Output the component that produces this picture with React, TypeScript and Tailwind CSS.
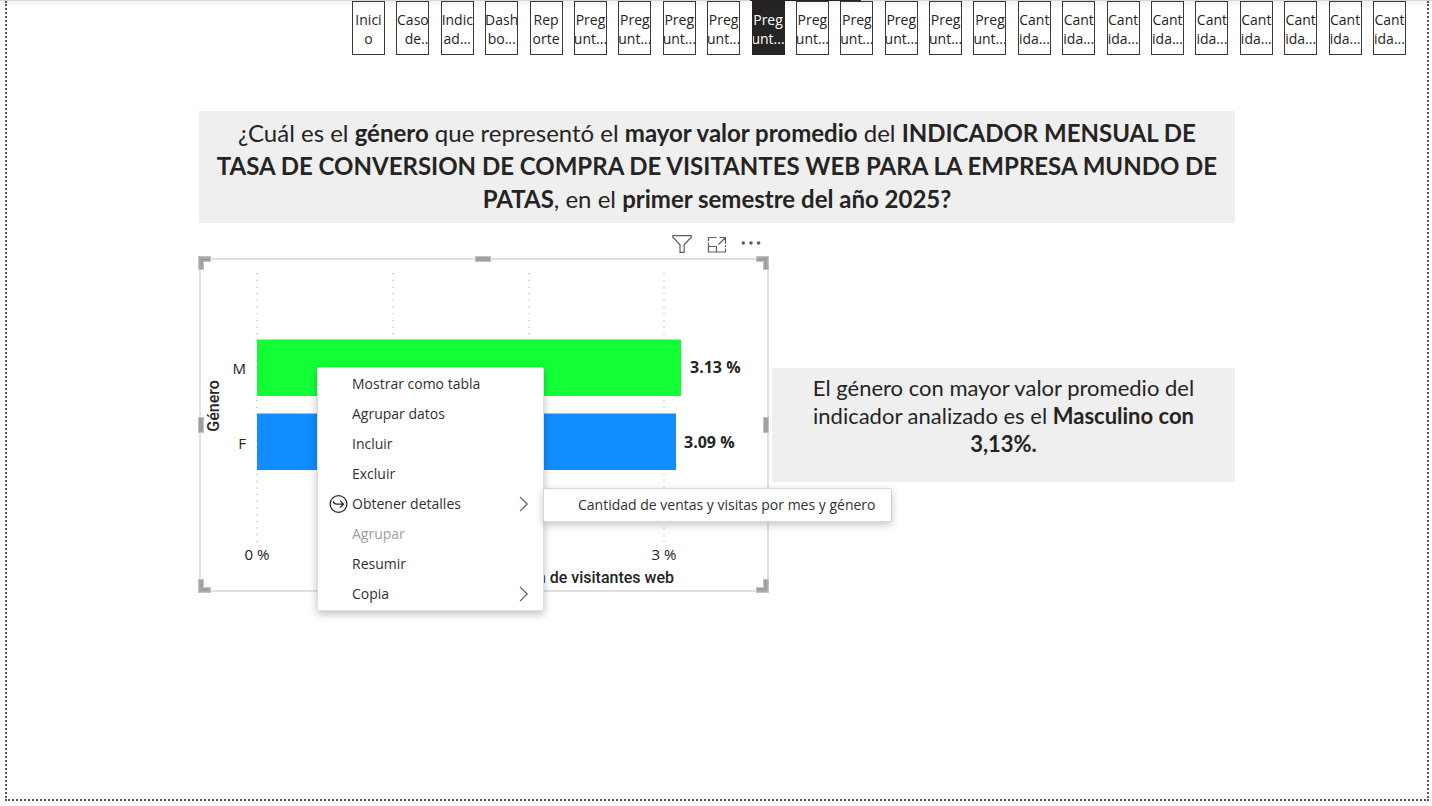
const tabs = [
  'Inici o', 'Caso \u00a0\u00a0de..', 'Indic ad...', 'Dash bo...', 'Rep orte',
  'Preg unt...', 'Preg unt...', 'Preg unt...', 'Preg unt...', 'Preg unt...', 'Preg unt...',
  'Preg unt...', 'Preg unt...', 'Preg unt...', 'Preg unt...',
  'Cant ida...', 'Cant ida...', 'Cant ida...', 'Cant ida...', 'Cant ida...', 'Cant ida...',
  'Cant ida...', 'Cant ida...', 'Cant ida...',
];
const activeTab = 9;

const menuItems = [
  { label: 'Mostrar como tabla' },
  { label: 'Agrupar datos' },
  { label: 'Incluir' },
  { label: 'Excluir' },
  { label: 'Obtener detalles', submenu: true, icon: true },
  { label: 'Agrupar', disabled: true },
  { label: 'Resumir' },
  { label: 'Copia', submenu: true },
];

function PageTabs() {
  return (
    <nav className="flex justify-end pr-[21px]" aria-label="Páginas">
      <div className="flex w-[1054px] justify-between">
        {tabs.map((label, i) => {
          const [first, second] = label.split(' ');
          return (
            <button
              key={i}
              className={
                i === activeTab
                  ? 'h-[54px] w-[33px] overflow-hidden border border-[#252423] bg-[#252423] pt-0.5 text-center text-sm leading-[19px] text-white'
                  : 'h-[54px] w-[33px] overflow-hidden border border-[#3b3a39] bg-white pt-0.5 text-center text-sm leading-[19px] text-[#252423]'
              }
            >
              <span className="flex flex-col items-center whitespace-nowrap">
                <span>{first}</span>
                <span>{second}</span>
              </span>
            </button>
          );
        })}
      </div>
    </nav>
  );
}

function VisualToolbar() {
  return (
    <div className="flex h-[35px] items-center justify-end gap-[15px] pr-2 pt-[7px] text-[#605e5c]">
      <button aria-label="Filtros">
        <svg width="20" height="20" viewBox="0 0 20 20" fill="none" stroke="currentColor" strokeWidth="1.2">
          <path d="M.8 1.6h18.4v1.6l-7.1 7.6v7.6H8v-7.6L.8 3.2z" />
        </svg>
      </button>
      <button aria-label="Modo de enfoque">
        <svg width="19" height="20" viewBox="0 0 19 20" fill="none" stroke="currentColor" strokeWidth="1.2">
          <path d="M9.500 3.500H1.500v3.500M1.500 8.500v9.500h17v-3.500M1.500 12.500h8v5.500M11.500 10.500l6.500-6.500M12.500 3.500h6v6M18.500 11v2" />
        </svg>
      </button>
      <button aria-label="Más opciones">
        <svg width="20" height="20" viewBox="0 0 20 20" fill="currentColor">
          <circle cx="2.3" cy="9" r="1.8" />
          <circle cx="10" cy="9" r="1.8" />
          <circle cx="17.6" cy="9" r="1.8" />
        </svg>
      </button>
    </div>
  );
}

function Corner({ className }: { className: string }) {
  return (
    <svg className={className} width="13" height="14" viewBox="0 0 13 14">
      <path d="M0 0h13v6H6v8H0z" fill="#c2c2c2" />
      <path d="M1 1h11v4H5v8H1z" fill="#a9a9a9" />
      <path d="M3 3h9v1H4v9H3z" fill="#949494" />
    </svg>
  );
}

function BarChart() {
  const lines = [56, 192, 328, 463];
  return (
    <svg
      className="block w-full"
      height="330"
      role="img"
      aria-label="Promedio por género"
      fontFamily="'Open Sans', 'Noto Sans', sans-serif"
      fontSize="15"
      fill="#252423"
    >
      {lines.map((x) => (
        <line key={x} x1={x} x2={x} y1="13" y2="282" stroke="#b8b6b4" strokeWidth="1.4" strokeDasharray="1 5.7" />
      ))}
      <rect x="56" y="79.5" width="424" height="56.5" fill="#12ff37" />
      <rect x="56" y="153.5" width="419" height="56.5" fill="#118dff" />
      <text x="45" y="114" textAnchor="end">M</text>
      <text x="45" y="189" textAnchor="end">F</text>
      <text x="489" y="113" fontSize="16" fontWeight="700">3.13 %</text>
      <text x="483" y="188" fontSize="16" fontWeight="700">3.09 %</text>
      <text x="56" y="300" textAnchor="middle">0 %</text>
      <text x="463" y="300" textAnchor="middle">3 %</text>
      <g fontFamily="Roboto, sans-serif" fontSize="16" fontWeight="500">
        <text x="473" y="323" textAnchor="end">conversión de visitantes web</text>
        <text transform="translate(18 146) rotate(-90)" textAnchor="middle">Género</text>
      </g>
    </svg>
  );
}

function ContextMenu() {
  return (
    <div className="absolute left-[116px] top-[107px] w-[227px] rounded-xs border border-[#e1dfdd] bg-white py-px shadow-[0_3px_8px_rgba(0,0,0,0.25)]">
      <ul>
        {menuItems.map((item) => (
          <li key={item.label}>
            <button
              disabled={item.disabled}
              className="flex h-[30px] w-full items-center pl-[11px] pr-[14px] text-left text-sm text-[#323130] disabled:text-[#a19f9d]"
            >
              <span className="w-[23px]">
                {item.icon && (
                  <svg width="19" height="19" viewBox="0 0 19 19" fill="none" stroke="#252423" strokeWidth="1.2">
                    <circle cx="9.5" cy="9" r="8.4" />
                    <path d="M4.4 5.9c.2 2.300 1.400 3.300 3.600 3.300h6.300M11 5.700l3.500 3.500-3.500 3.500" />
                  </svg>
                )}
              </span>
              <span className="flex-1">{item.label}</span>
              {item.submenu && (
                <svg width="10" height="16" viewBox="0 0 10 16" fill="none" stroke="#605e5c" strokeWidth="1.2">
                  <path d="M1 .8 8.200 8 1 15.200" />
                </svg>
              )}
            </button>
          </li>
        ))}
      </ul>
      <button className="absolute left-[225px] top-[120px] h-[34px] w-[349px] whitespace-nowrap rounded-xs border border-[#d8d6d4] bg-white pl-[34px] text-left text-sm text-[#323130] shadow-[0_3px_8px_rgba(0,0,0,0.22)]">
        Cantidad de ventas y visitas por mes y género
      </button>
    </div>
  );
}

export default function App() {
  return (
    <div className="flex min-h-screen flex-col bg-white pb-[5px] font-['Open_Sans','Noto_Sans',sans-serif] text-[#252423]">
      <div className="relative z-10 h-px bg-[#d6d6d6] shadow-[0_1px_6px_rgba(0,0,0,0.3)]">
        <div className="absolute left-[750px] top-0 h-px w-[111px] bg-[#252423]" />
      </div>
      <div className="ml-[5px] mr-[3px] flex-1 border-x-2 border-b-2 border-dotted border-[#555]">
        <PageTabs />
        <main className="mx-auto max-w-[1036px] pt-14">
          <h1 className="h-28 bg-[#efefef] px-2 pt-[5px] text-center font-[Lato,sans-serif] text-2xl leading-[33px]">
            ¿Cuál es el <b>género</b> que representó el <b>mayor valor promedio</b> del <b>INDICADOR MENSUAL DE</b>
            <br />
            <b>TASA DE CONVERSION DE COMPRA DE VISITANTES WEB PARA LA EMPRESA MUNDO DE</b>
            <br />
            <b>PATAS</b>, en el <b>primer semestre del año 2025?</b>
          </h1>
          <div className="flex gap-[3px]">
            <section className="w-[570px] shrink-0">
              <VisualToolbar />
              <div className="relative border-2 border-[#e1e1e1]">
                <BarChart />
                <Corner className="absolute -left-[3px] -top-1" />
                <Corner className="absolute -right-[2px] -top-1 -scale-x-100" />
                <Corner className="absolute -bottom-[3px] -left-[3px] -scale-y-100" />
                <Corner className="absolute -bottom-[3px] -right-[2px] -scale-100" />
                <span className="absolute -top-1 left-[274px] h-[6px] w-4 border border-[#c2c2c2] bg-[#a0a0a0]" />
                <span className="absolute -left-[3px] top-[157px] h-4 w-[6px] border border-[#c2c2c2] bg-[#a0a0a0]" />
                <span className="absolute -right-[2px] top-[157px] h-4 w-[6px] border border-[#c2c2c2] bg-[#a0a0a0]" />
                <ContextMenu />
              </div>
            </section>
            <p className="mt-[145px] h-[114px] flex-1 self-start bg-[#efefef] pt-[6px] text-center font-[Lato,sans-serif] text-[22px] leading-[28px]">
              El género con mayor valor promedio del
              <br />
              indicador analizado es el <b>Masculino con</b>
              <br />
              <b>3,13%.</b>
            </p>
          </div>
        </main>
      </div>
    </div>
  );
}
